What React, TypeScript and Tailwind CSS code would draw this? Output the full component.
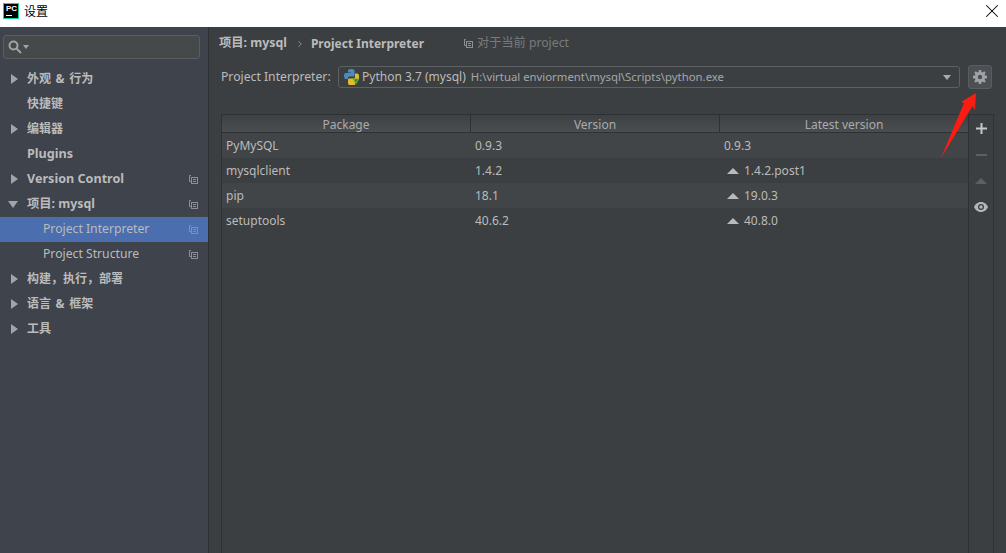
import { ChevronRight, X } from "lucide-react";

const FONT = "[font-family:'Noto_Sans','Noto_Sans_CJK_SC',sans-serif]";

interface NavItem {
  label: string;
  size: string;
  arrow?: "right" | "down";
  bold?: boolean;
  child?: boolean;
  selected?: boolean;
  scoped?: boolean;
}

const navItems: NavItem[] = [
  { label: "外观 & 行为", size: "text-[12px] pb-[2px] [word-spacing:1.5px]", arrow: "right", bold: true },
  { label: "快捷键", size: "text-[12px] pb-[2px]", bold: true },
  { label: "编辑器", size: "text-[12px] pb-[2px]", arrow: "right", bold: true },
  { label: "Plugins", size: "text-[12.6px]", bold: true },
  { label: "Version Control", size: "text-[12.6px]", arrow: "right", bold: true, scoped: true },
  { label: "项目: mysql", size: "text-[12.3px]", arrow: "down", bold: true, scoped: true },
  { label: "Project Interpreter", size: "text-[12.2px]", child: true, selected: true, scoped: true },
  { label: "Project Structure", size: "text-[12.2px]", child: true, scoped: true },
  { label: "构建，执行，部署", size: "text-[12px] pb-[2px]", arrow: "right", bold: true },
  { label: "语言 & 框架", size: "text-[12px] pb-[2px] [word-spacing:1.5px]", arrow: "right", bold: true },
  { label: "工具", size: "text-[12px] pb-[2px]", arrow: "right", bold: true },
];

const packages = [
  { name: "PyMySQL", version: "0.9.3", latest: "0.9.3", upgrade: false },
  { name: "mysqlclient", version: "1.4.2", latest: "1.4.2.post1", upgrade: true },
  { name: "pip", version: "18.1", latest: "19.0.3", upgrade: true },
  { name: "setuptools", version: "40.6.2", latest: "40.8.0", upgrade: true },
];

function ScopeIcon({ className = "" }: { className?: string }) {
  return (
    <svg width="9" height="9" viewBox="0 0 9 9" fill="none" stroke="#8c9094" strokeWidth="1" className={className}>
      <path d="M2 .5H.5V6.500H2" />
      <rect x="2.500" y="2.500" width="6" height="6" />
      <path d="M4 4.500H7M4 6.500H7" />
    </svg>
  );
}

function PcLogo() {
  return (
    <div className="flex h-4 w-4 shrink-0 flex-col bg-black border border-[#18d6a0] px-[2px] pt-[1px]">
      <span className="text-[8px] font-bold leading-[8px] text-white [font-family:'Liberation_Sans',sans-serif]">PC</span>
      <span className="mt-[2px] h-[1px] w-[6px] bg-white" />
    </div>
  );
}

function PythonIcon() {
  return (
    <svg width="16" height="16" viewBox="0 0 16 16">
      <path d="M4 1.5C4 .6 5 0 7.5 0S10.500.800 10.500 2V6C10.500 7 10 7.500 9 7.500H5.500C4.500 7.500 4 8 4 9V10H2C.7 10 0 9 0 7S.7 4 2 4H7V3.500H4Z" fill="#4b8bbe" />
      <path d="M11 4.500H13C14.500 4.500 15 5.500 15 7.500V10H11V16H5.500C4.500 16 4 15 4 14V11C4 10 4.500 9.500 5.500 9.500H9C10.300 9.500 11 9 11 8Z" fill="#e5b92e" />
      <path d="M8.500 9.500H15.500L12 15.500Z" fill="#5fb13a" />
      <path d="M10.800 10.500H13.200L12 13Z" fill="#2e6b1e" />
    </svg>
  );
}

function Gear() {
  return (
    <svg width="14" height="14" viewBox="0 0 14 14" fill="#9da3a8">
      <path
        fillRule="evenodd"
        d="M5.800 0H8.200L8.500 1.900L9.700 2.400L11.300 1.300L12.700 2.700L11.600 4.300L12.100 5.500L14 5.800V8.200L12.100 8.500L11.600 9.700L12.700 11.300L11.300 12.700L9.700 11.600L8.500 12.100L8.200 14H5.800L5.500 12.100L4.300 11.600L2.700 12.700L1.300 11.300L2.400 9.700L1.900 8.500L0 8.200V5.800L1.900 5.500L2.400 4.300L1.300 2.700L2.700 1.300L4.300 2.400L5.500 1.900ZM7 4.800A2.200 2.200 0 1 0 7 9.200A2.200 2.200 0 1 0 7 4.800Z"
      />
    </svg>
  );
}

function Sidebar() {
  return (
    <aside className="flex w-[209px] shrink-0 flex-col border-r border-[#2f3234] bg-[#3e434c]">
      <div className="mx-[3px] mt-[8px] mb-[8px] flex h-[24px] w-[197px] items-center gap-[1px] rounded-[3px] border border-[#5a5d5f] bg-[#45494a] pl-[4px]">
        <svg width="14" height="14" viewBox="0 0 14 14" fill="none" stroke="#a0a4a8" strokeWidth="2">
          <circle cx="5.500" cy="5.500" r="4" />
          <path d="M8.500 8.500L13 13" />
        </svg>
        <span className="h-0 w-0 border-x-[3px] border-t-[4px] border-x-transparent border-t-[#a0a4a8]" />
      </div>
      {navItems.map((item) => (
        <div
          key={item.label}
          className={`flex h-[25px] items-center pr-[10px] text-[#bbbbbb] ${item.selected ? "bg-[#4b6eaf]" : ""}`}
        >
          <span className="flex w-[27px] shrink-0 justify-end pr-[9px] pb-[1px]">
            {item.arrow === "right" && (
              <span className="h-0 w-0 border-y-[5px] border-l-[7px] border-y-transparent border-l-[#a2a5a8]" />
            )}
            {item.arrow === "down" && (
              <span className="h-0 w-0 border-x-[5px] border-t-[7px] border-x-transparent border-t-[#a2a5a8]" />
            )}
          </span>
          <span className={`flex-1 whitespace-nowrap ${item.size} ${item.child ? "pl-[16px]" : ""} ${item.bold ? "font-bold" : ""}`}>
            {item.label}
          </span>
          {item.scoped && <ScopeIcon />}
        </div>
      ))}
    </aside>
  );
}

function PackageTable() {
  return (
    <div className="flex min-h-0 flex-1 pl-[12px] pr-[12px]">
      <div className="flex min-w-0 flex-1 flex-col border-x border-t border-[#2f3234]">
        <div className="grid h-[18px] shrink-0 grid-cols-[249px_249px_1fr] border-b border-[#2f3234] bg-gradient-to-b from-[#3e4143] to-[#4b4e50] text-[12px] leading-[20px] text-[#a9acae]">
          <span className="border-r border-[#2f3234] text-center">Package</span>
          <span className="border-r border-[#2f3234] text-center">Version</span>
          <span className="text-center">Latest version</span>
        </div>
        {packages.map((pkg, i) => (
          <div
            key={pkg.name}
            className={`grid h-[25px] shrink-0 grid-cols-[249px_249px_1fr] items-center text-[12px] text-[#bbbbbb] ${i % 2 === 0 ? "bg-[#414547]" : "bg-[#3c3f41]"}`}
          >
            <span className="pl-[4px]">{pkg.name}</span>
            <span className="pl-[4px]">{pkg.version}</span>
            <span className="flex items-center gap-[5px] pl-[4px]">
              {pkg.upgrade && (
                <span className="ml-[3px] h-0 w-0 border-x-[6px] border-b-[6px] border-x-transparent border-b-[#b8bbbd]" />
              )}
              {pkg.latest}
            </span>
          </div>
        ))}
      </div>
      <div className="flex w-[25px] shrink-0 flex-col items-center border-t border-r border-[#2f3234] pt-[4px] text-[#c0c3c5]">
        <svg width="11" height="11" viewBox="0 0 11 11" className="mt-[4px]" fill="#c4c7c9">
          <path d="M4.500 0H6.500V4.500H11V6.500H6.500V11H4.500V6.500H0V4.500H4.500Z" />
        </svg>
        <span className="mt-[20px] h-[2px] w-[11px] bg-[#5d6062]" />
        <span className="mt-[22px] h-0 w-0 border-x-[6px] border-b-[6px] border-x-transparent border-b-[#5d6062]" />
        <svg width="14" height="10" viewBox="0 0 14 10" className="mt-[18px]" fill="#b4b7b9">
          <path
            fillRule="evenodd"
            d="M7 0C10.500 0 13 2.500 14 5C13 7.500 10.500 10 7 10C3.500 10 1 7.500 0 5C1 2.500 3.500 0 7 0ZM7 2A3 3 0 1 0 7 8A3 3 0 1 0 7 2Z"
          />
          <circle cx="7" cy="5" r="1.700" />
        </svg>
      </div>
    </div>
  );
}

function Main() {
  return (
    <main className="flex min-w-0 flex-1 flex-col bg-[#3c3f41] text-[#bbbbbb]">
      <div className="flex h-[33px] shrink-0 items-center pl-[10px] text-[12px]">
        <span className="text-[12.3px] font-bold">项目: mysql</span>
        <ChevronRight size={10} className="ml-[8px] mr-[6px] text-[#9a9da0]" />
        <span className="font-bold">Project Interpreter</span>
        <ScopeIcon className="ml-[40px]" />
        <span className="ml-[4px] text-[12.2px] text-[#787b7d]">对于当前 project</span>
      </div>
      <div className="mt-[5px] flex h-[24px] shrink-0 items-center pl-[12px] pr-[14px]">
        <span className="w-[117px] shrink-0 text-[12.2px]">Project Interpreter:</span>
        <div className="flex h-[22px] w-[622px] items-center rounded-[3px] border border-[#5e6163] pl-[5px] pr-[8px] text-[12px]">
          <PythonIcon />
          <span className="ml-[2px] text-[#bbbbbb]">Python 3.7 (mysql)</span>
          <span className="ml-[5px] flex-1 truncate text-[11.35px] text-[#a4a7a9]">H:\virtual enviorment\mysql\Scripts\python.exe</span>
          <span className="h-0 w-0 border-x-[4.500px] border-t-[5px] border-x-transparent border-t-[#a8abad]" />
        </div>
        <div className="ml-[8px] flex h-[24px] w-[24px] items-center justify-center rounded-[3px] border border-[#5a5d5f] bg-[#4c5052]">
          <Gear />
        </div>
      </div>
      <div className="h-[25px] shrink-0" />
      <PackageTable />
    </main>
  );
}

export default function App() {
  return (
    <div className={`relative flex h-screen flex-col overflow-hidden ${FONT}`}>
      <header className="flex h-[27px] shrink-0 items-start bg-white pl-[3px] pr-[3px] pt-[3px]">
        <PcLogo />
        <span className="ml-[5px] flex-1 text-[12px] leading-[18px] text-black">设置</span>
        <X size={22} strokeWidth={1.1} className="-mt-[3px] text-black" />
      </header>
      <div className="flex min-h-0 flex-1">
        <Sidebar />
        <Main />
      </div>
      {/* red annotation arrow pointing at the gear button */}
      <svg width="40" height="70" viewBox="0 0 40 70" className="absolute left-[940px] top-[91px]">
        <path d="M36 2L35 19L32.500 15L1 67L24 12L21 11Z" fill="#fb1c12" />
      </svg>
    </div>
  );
}
